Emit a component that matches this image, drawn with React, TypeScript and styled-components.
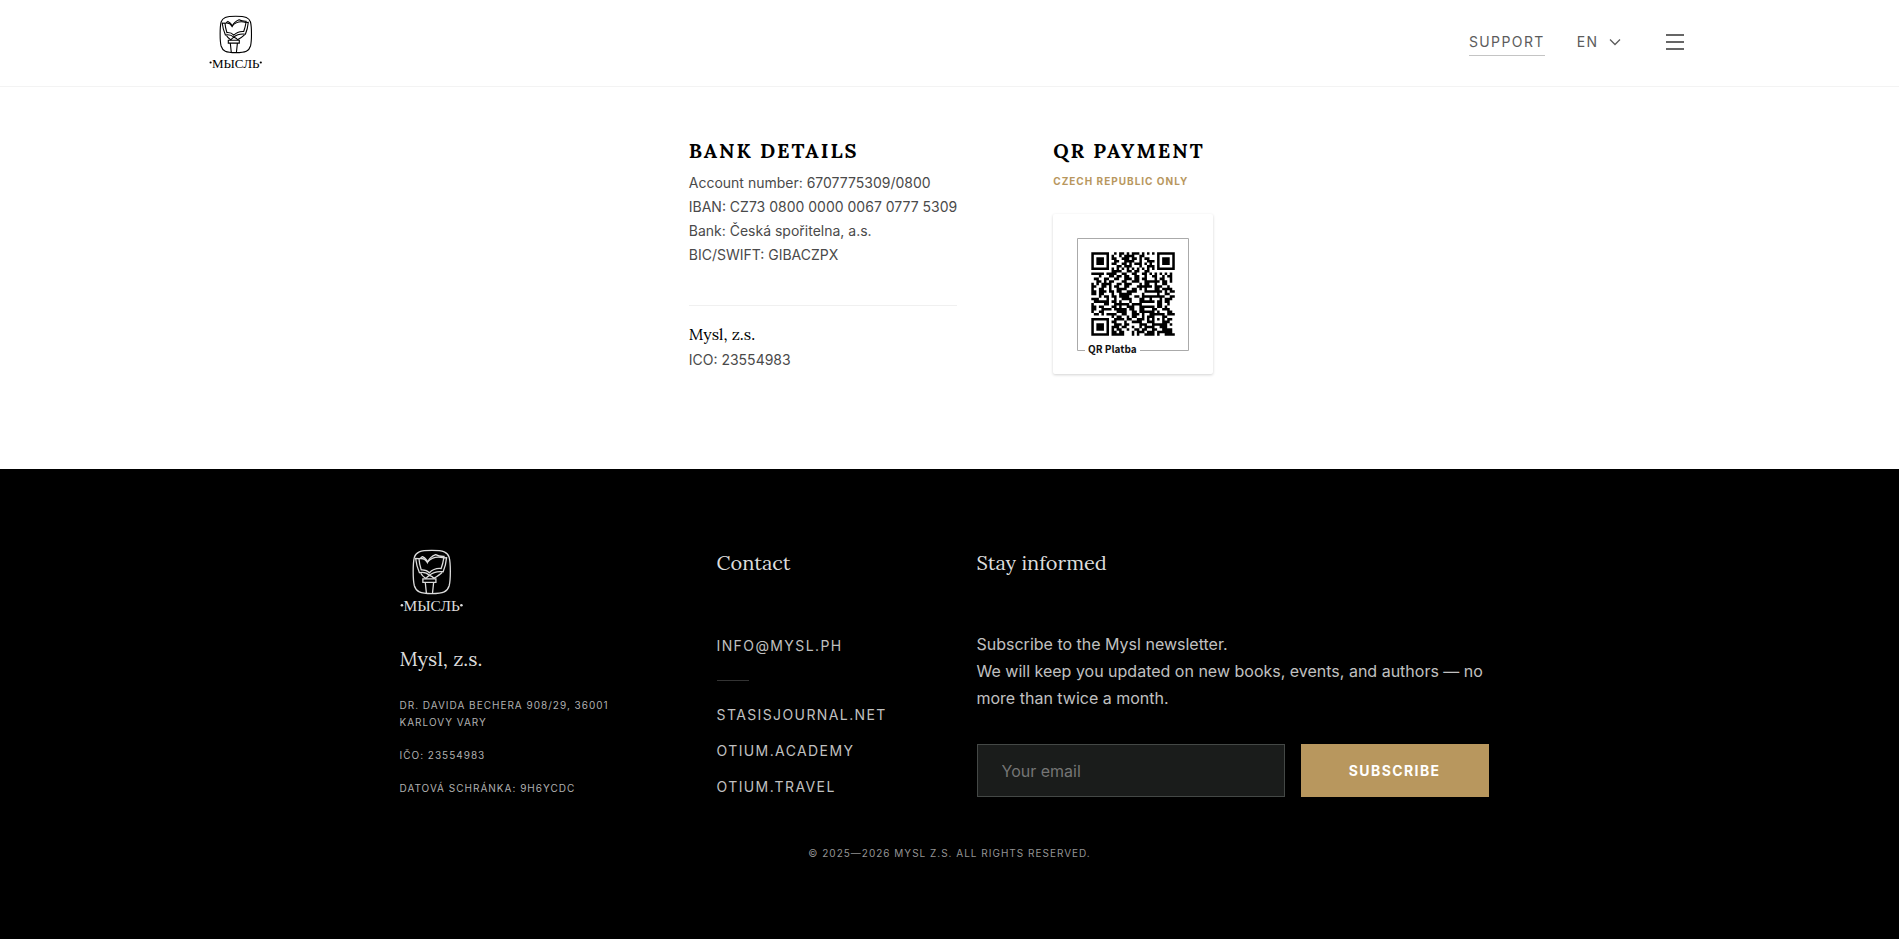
import React from "react";
import styled, { createGlobalStyle } from "styled-components";

const sans = `Inter, "Liberation Sans", sans-serif`;
const serif = `Lora, "Liberation Serif", serif`;

const GlobalStyle = createGlobalStyle`
  *, *::before, *::after { box-sizing: border-box; }
  html, body, #root { min-height: 100vh; }
  body { margin: 0; background: #fff; font-family: ${sans}; color: #4a4a4a; }
  h2, h3, p, ul { margin: 0; padding: 0; }
  a { color: inherit; text-decoration: none; }
`;

const Page = styled.div`
  display: flex;
  flex-direction: column;
  min-height: 100vh;
`;

const Header = styled.header`
  border-bottom: 1px solid #f3f3f3;
`;

const HeaderInner = styled.div`
  display: flex;
  align-items: center;
  justify-content: space-between;
  max-width: 1530px;
  height: 86px;
  margin: 0 auto;
  padding: 0 28px 0 24px;
`;

const LogoLink = styled.a`
  display: block;
  svg { display: block; }
`;

const Nav = styled.nav`
  display: flex;
  align-items: center;
  gap: 32px;
  margin-bottom: 2px;
  font-size: 14px;
  line-height: 20px;
  letter-spacing: 0.1em;
  color: #5c5c5c;
`;

const SupportLink = styled.a`
  padding-bottom: 3px;
  margin-top: 4px;
  border-bottom: 1px solid #c4c4c4;
`;

const PlainButton = styled.button`
  display: flex;
  align-items: center;
  gap: 8px;
  padding: 0;
  border: 0;
  background: none;
  font: inherit;
  letter-spacing: inherit;
  color: inherit;
  cursor: pointer;
`;

const MenuButton = styled(PlainButton)`
  margin-left: 8px;
`;

const Payment = styled.main`
  display: flex;
  justify-content: center;
  gap: 96px;
  padding: 50px 24px 95px 27px;
`;

const Title = styled.h2`
  font-family: ${serif};
  font-size: 20px;
  line-height: 28px;
  font-weight: 700;
  letter-spacing: 2px;
  color: #000;
`;

const BankLines = styled.div`
  margin-top: 6px;
  padding-bottom: 38px;
  border-bottom: 1px solid #f0f0f0;
  font-size: 14px;
  line-height: 24px;
`;

const Company = styled.div`
  padding-top: 14px;
  font-size: 14px;
  line-height: 24px;
`;

const CompanyName = styled.h3`
  font-family: ${serif};
  font-size: 16px;
  line-height: 28px;
  font-weight: 400;
  color: #000;
`;

const Caption = styled.p`
  margin: 8px 0 25px;
  font-size: 10px;
  line-height: 16px;
  font-weight: 700;
  letter-spacing: 1px;
  color: #b8975e;
`;

const QrCard = styled.div`
  width: 160px;
  background: #fff;
  border-radius: 2px;
  box-shadow: 0 1px 3px rgba(0, 0, 0, 0.18);
  svg { display: block; }
`;

const Footer = styled.footer`
  flex: 1;
  padding: 80px 24px;
  background: #000;
  color: #c0c0c0;
`;

const FooterGrid = styled.div`
  display: grid;
  grid-template-columns: 253px 196px 1fr;
  gap: 64px;
  max-width: 1100px;
  margin: 0 auto;
`;

const FooterHeading = styled.h3`
  font-family: ${serif};
  font-size: 20px;
  line-height: 28px;
  font-weight: 400;
  color: #dcdcdc;
`;

const Organisation = styled.div`
  display: flex;
  flex-direction: column;
  gap: 30px;
`;

const Address = styled.div`
  display: flex;
  flex-direction: column;
  gap: 16px;
  margin-top: -6px;
  max-width: 220px;
  font-size: 10px;
  line-height: 17px;
  letter-spacing: 1px;
  color: #b0b0b0;
`;

const Links = styled.ul`
  display: flex;
  flex-direction: column;
  gap: 16px;
  list-style: none;
  font-size: 14px;
  line-height: 20px;
  letter-spacing: 0.1em;
`;

const ContactLink = styled.a`
  display: block;
  margin-top: 59px;
  font-size: 14px;
  line-height: 20px;
  letter-spacing: 0.1em;
`;

const ShortRule = styled.hr`
  width: 32px;
  height: 1px;
  margin: 24px 0;
  border: 0;
  background: #333;
`;

const Intro = styled.p`
  margin-top: 54px;
  font-size: 16px;
  line-height: 27px;
`;

const Newsletter = styled.div`
  max-width: 512px;
`;

const Form = styled.form`
  display: flex;
  gap: 16px;
  margin-top: 32px;
`;

const EmailInput = styled.input`
  flex: 1;
  min-width: 0;
  height: 53px;
  padding: 0 24px;
  border: 1px solid #444846;
  border-radius: 0;
  background: #1a1c1b;
  font-family: ${sans};
  font-size: 16px;
  color: #ddd;
  &::placeholder { color: #757575; opacity: 1; }
`;

const SubscribeButton = styled.button`
  padding: 0 48px;
  border: 0;
  background: #b8975e;
  font-family: ${sans};
  font-size: 14px;
  font-weight: 700;
  letter-spacing: 0.1em;
  color: #fff;
`;

const Copyright = styled.p`
  margin-top: 48px;
  text-align: center;
  font-size: 10px;
  line-height: 16px;
  letter-spacing: 1px;
  color: #949494;
`;

function Logo({ width, color }: { width: number; color: string }) {
  return (
    <svg width={width} viewBox="0 0 54 56" fill="none" stroke={color} strokeWidth="1.100" role="img" aria-label="Мысль">
      <path d="M26.800 1.200C36.800 1.200 40 2.500 41.500 7c1.300 5 1.300 19 0 24-1.500 5-4.700 6.600-14.700 6.600S13.600 36 12.100 31c-1.300-5-1.300-19 0-24 1.500-4.500 4.700-5.800 14.700-5.800z" />
      <path d="M16 8.200 13.200 8c.5 4.500 1.600 8.200 3.200 12 3.600-.7 6.200 0 8.400 2.200 3.200-2.800 7-3.600 11.600-3 1.700-4 2.500-7.500 2.900-11.900l-2.100.2" />
      <path d="M16 8.200c2.800-.6 5.200 0 7 3 3.800-4.400 8.600-5.200 14-3.700-.6 3.700-1.200 6-2.300 9-4-.4-7 .6-9.900 3.600-1.900-2.100-4.200-2.700-6.900-2.500-.9-3-1.700-6-1.900-9.400z" />
      <path d="M17.300 8c.3-.8.900-1.300 1.600-1.600 2.200.9 3.600 2.300 4.300 4.800 1.300-3 3.700-5.200 6.900-6.400 2 1.100 4 1.600 7 1.500v1.200" />
      <path d="M17.500 20.500c.8 1.700 2.200 3 4.500 4.500M35.500 19.800c-2 2-4 3.200-7 5M22 24.800c.8-1.400 1.800-2.100 2.900-2.600 1.600.5 2.800 1.200 3.800 2.600" />
      <path d="M19.300 25.200h11v2.900h-11zM21.300 28.100l1 9.400M28.400 28.100l-1 9.400" />
      <circle cx="1.600" cy="47.500" r="1.100" fill={color} stroke="none" />
      <circle cx="51.800" cy="47.500" r="1.100" fill={color} stroke="none" />
      <text x="26.700" y="52.500" textAnchor="middle" fontFamily='"Liberation Serif", serif' fontSize="13" fill={color} stroke="none">
        МЫСЛЬ
      </text>
    </svg>
  );
}

const qrRows = [
  "#######..#.##.#.###.#.#.#.#######",
  "#.....#.#..#.####..##.....#.....#",
  "#.###.#.##..###.##.#.##...#.###.#",
  "#.###.#..##..####..#..###.#.###.#",
  "#.###.#.##..##.#.###.#.#..#.###.#",
  "#.....#...##.###...#..###.#.....#",
  "#######.#.#.#.#.#.#.#.#.#.#######",
  "........####..##.##..##..........",
  "#####.####..##..##..##.#.#.#.#.#.",
  "...#...##.##.##..##..#..##..#.##.",
  ".##..##..##..###.##.##...#.##..#.",
  "..##.#.##...##..###..######.##.#.",
  "#.#.####..##.###...#.##..#..##...",
  "##..##.#.##..##...######.###..#..",
  "#..##..#..####..##.#.#...##.####.",
  "##.###.##.##..####...#######.#.##",
  "##.##...#..#####....#.....#..##..",
  "...#.##.##.####..##.#########..##",
  "###...#..#..####...##..#...#.###.",
  ".######.##.#...#...######.##.##..",
  "#....##..######.####......##..#..",
  "##.##...##.#..###..######.##.#...",
  "##..####.#####.##..##...##..###..",
  "#..##.....####..##.######.#...##.",
  ".##.#.####..##..###.#..######.###",
  "........#.##..#.##..#.###...##...",
  "#######..####.##..###.#.#.#.#.##.",
  "#.....#.##...#..####..###...###..",
  "#.###.#..###.##....###..######.#.",
  "#.###.#.###.##..#..#.####..###...",
  "#.###.#.#.##..#..##.##..##..####.",
  "#.....#.##.##...#.###.###.######.",
  "#######.#####...#.#..####.#..####",
];

const qrPath = qrRows
  .flatMap((row, y) => Array.from(row, (cell, x) => (cell === "#" ? `M${x} ${y}h1v1h-1z` : "")))
  .join("");

function QrCode() {
  return (
    <svg width="160" height="160" viewBox="0 0 160 160" role="img" aria-label="QR Platba">
      <path d="M32 136.500H24.500V24.500H135.500V136.500H87" fill="none" stroke="#aaa" />
      <path d={qrPath} fill="#000" transform="translate(38.300 38.300) scale(2.530)" />
      <text x="35" y="139" fontFamily='"Noto Sans CJK SC", sans-serif' fontSize="10" fontWeight="700" fill="#111">
        QR Platba
      </text>
    </svg>
  );
}

export default function App() {
  return (
    <Page>
      <GlobalStyle />
      <Header>
        <HeaderInner>
          <LogoLink href="#" aria-label="Home">
            <Logo width={54} color="#000" />
          </LogoLink>
          <Nav>
            <SupportLink href="#support">SUPPORT</SupportLink>
            <PlainButton type="button">
              EN
              <svg width="16" height="16" viewBox="0 0 16 16" fill="none" stroke="currentColor" strokeWidth="1.300">
                <path d="M3 5.500l5 5 5-5" />
              </svg>
            </PlainButton>
            <MenuButton type="button" aria-label="Menu">
              <svg width="24" height="24" viewBox="0 0 24 24" fill="none" stroke="#666" strokeWidth="2">
                <path d="M3 5h18M3 12h18M3 19h18" />
              </svg>
            </MenuButton>
          </Nav>
        </HeaderInner>
      </Header>

      <Payment>
        <section>
          <Title>BANK DETAILS</Title>
          <BankLines>
            <p>Account number: 6707775309/0800</p>
            <p>IBAN: CZ73 0800 0000 0067 0777 5309</p>
            <p>Bank: Česká spořitelna, a.s.</p>
            <p>BIC/SWIFT: GIBACZPX</p>
          </BankLines>
          <Company>
            <CompanyName>Mysl, z.s.</CompanyName>
            <p>ICO: 23554983</p>
          </Company>
        </section>
        <section>
          <Title>QR PAYMENT</Title>
          <Caption>CZECH REPUBLIC ONLY</Caption>
          <QrCard>
            <QrCode />
          </QrCard>
        </section>
      </Payment>

      <Footer>
        <FooterGrid>
          <Organisation>
            <LogoLink href="#" aria-label="Home">
              <Logo width={64} color="#dcdcdc" />
            </LogoLink>
            <FooterHeading>Mysl, z.s.</FooterHeading>
            <Address>
              <p>DR. DAVIDA BECHERA 908/29, 36001 KARLOVY VARY</p>
              <p>IČO: 23554983</p>
              <p>DATOVÁ SCHRÁNKA: 9H6YCDC</p>
            </Address>
          </Organisation>
          <div>
            <FooterHeading>Contact</FooterHeading>
            <ContactLink href="mailto:info@mysl.ph">INFO@MYSL.PH</ContactLink>
            <ShortRule />
            <Links>
              <li><a href="#stasis">STASISJOURNAL.NET</a></li>
              <li><a href="#academy">OTIUM.ACADEMY</a></li>
              <li><a href="#travel">OTIUM.TRAVEL</a></li>
            </Links>
          </div>
          <Newsletter>
            <FooterHeading>Stay informed</FooterHeading>
            <Intro>
              Subscribe to the Mysl newsletter.
              <br />
              We will keep you updated on new books, events, and authors — no more than twice a month.
            </Intro>
            <Form onSubmit={(event) => event.preventDefault()}>
              <EmailInput type="email" placeholder="Your email" aria-label="Your email" />
              <SubscribeButton type="submit">SUBSCRIBE</SubscribeButton>
            </Form>
          </Newsletter>
        </FooterGrid>
        <Copyright>© 2025—2026 MYSL Z.S. ALL RIGHTS RESERVED.</Copyright>
      </Footer>
    </Page>
  );
}
